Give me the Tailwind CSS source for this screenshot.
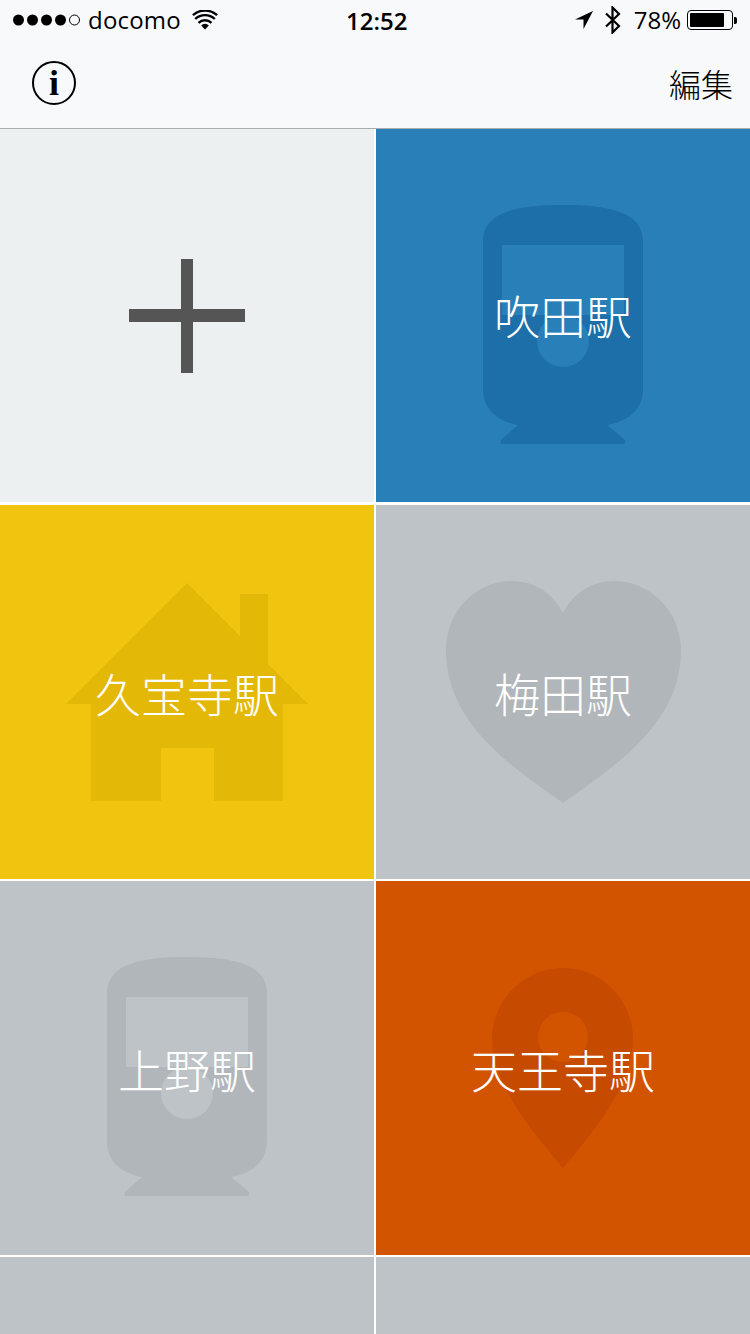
<!DOCTYPE html>
<html lang="ja">
<head>
<meta charset="utf-8">
<script src="https://cdn.jsdelivr.net/npm/@tailwindcss/browser@4"></script>
</head>
<body class="m-0 bg-white">
<div class="w-[750px] h-[1334px] overflow-hidden flex flex-col bg-white font-['Liberation_Sans','Noto_Sans_CJK_JP',sans-serif]">
  <header class="h-[129px] shrink-0 flex flex-col bg-[#f8f9fa] border-b border-[#a9abad] text-black">
    <div class="h-[40px] flex items-center justify-between pl-[13px] pr-[13px] text-[25px] relative">
      <div class="flex items-center">
        <svg width="68" height="12" viewBox="0 0 68 12"><g fill="#000"><circle cx="5.5" cy="6" r="5.5"/><circle cx="19.5" cy="6" r="5.5"/><circle cx="33.5" cy="6" r="5.5"/><circle cx="47.5" cy="6" r="5.5"/></g><circle cx="61.5" cy="6" r="5" fill="none" stroke="#000" stroke-width="1"/></svg>
        <span class="ml-[7px] font-['Open_Sans','Noto_Sans',sans-serif] text-[24px] tracking-[0.2px]">docomo</span>
        <svg class="ml-[11px]" width="26" height="20" viewBox="0 0 26 20"><path d="M13 19.5 9.2 15.4a5.4 5.4 0 0 1 7.6 0Z" fill="#000"/><path d="M6.5 12.2a9.5 9.5 0 0 1 13 0M3.2 8.4a14.3 14.3 0 0 1 19.6 0M.9 4.6a18 18 0 0 1 24.2 0" fill="none" stroke="#000" stroke-width="2.4" transform="translate(0 .6)"/></svg>
      </div>
      <div class="absolute left-[346px] top-[2px] text-[24px] font-semibold font-['Open_Sans',sans-serif] leading-[38px]">12:52</div>
      <div class="flex items-center">
        <svg width="20" height="20" viewBox="0 0 20 20"><path d="M19 1 1 9.5h8.5V19Z" fill="#000"/></svg>
        <svg class="ml-[10px]" width="18" height="28" viewBox="0 0 18 28"><path d="M2 7.5 15 20l-6.5 6.5v-25L15 8 2 20.5" fill="none" stroke="#000" stroke-width="2.2"/></svg>
        <span class="ml-[12px] font-['Open_Sans','Noto_Sans',sans-serif] text-[24px]">78%</span>
        <div class="ml-[6px] flex items-center">
          <div class="w-[46px] h-[20px] rounded-[4px] border border-black p-[2px]"><div class="w-[34px] h-full bg-black rounded-[1px]"></div></div>
          <div class="w-[3px] h-[7px] bg-black rounded-r-[2px] ml-[1px]"></div>
        </div>
      </div>
    </div>
    <div class="flex-1 flex items-center justify-between pl-[32px] pr-[17px] pb-[3px]">
      <div class="w-[44px] h-[44px] rounded-full border-2 border-black flex items-center justify-center font-['Liberation_Serif',serif] text-[36px] font-bold leading-none">i</div>
      <span class="text-[32px] leading-none font-['Noto_Sans_CJK_JP',sans-serif] font-light">編集</span>
    </div>
  </header>
  <main class="grid grid-cols-[374px_374px] auto-rows-[374px] gap-[2px] font-['Noto_Sans_CJK_JP',sans-serif]">
    <div class="relative h-[373px] bg-[#ecf0f1] flex items-center justify-center">
      <svg width="116" height="116" viewBox="0 0 116 116"><path d="M52 1h12v114H52zM0 51h116v13H0z" fill="#555"/></svg>
    </div>
    <div class="relative h-[373px] bg-[#2980b9] flex items-center justify-center text-white">
      <svg class="absolute inset-0" width="374" height="373" viewBox="0 0 374 373"><path fill-rule="evenodd" d="M187 76c-46 0-80 7-80 36v148c0 20 14 32 35 36l-16 14c-2 1-2 5 0 5h121c3 0 3-4 1-5l-17-14c22-4 36-16 36-36V112c0-29-34-36-80-36Zm-61 40h122v70H126Zm61 70a23 23 0 0 1 0 52 23 23 0 0 1 0-52Z" fill="#1c6fa9" transform="translate(0 0)"/></svg>
      <span class="relative text-[46px] font-light tracking-[0px] -mt-[2px]">吹田駅</span>
    </div>
    <div class="relative bg-[#f1c40f] flex items-center justify-center text-white">
      <svg class="absolute inset-0" width="374" height="374" viewBox="0 0 374 374"><path d="M187 78 66 199h25v97h70v-53h53v53h69v-97h25l-40-40v-70h-28v42Z" fill="#e3b807"/></svg>
      <span class="relative text-[46px] font-light">久宝寺駅</span>
    </div>
    <div class="relative bg-[#bdc3c7] flex items-center justify-center text-white">
      <svg class="absolute inset-0" width="374" height="374" viewBox="0 0 374 374"><path d="M187 298C130 258 70 216 70 145c0-39 30-69 66-69 24 0 42 14 51 32 9-18 27-32 51-32 36 0 67 30 67 69 0 71-61 113-118 153Z" fill="#b1b6ba"/></svg>
      <span class="relative text-[46px] font-light">梅田駅</span>
    </div>
    <div class="relative bg-[#bdc3c7] flex items-center justify-center text-white">
      <svg class="absolute inset-0" width="374" height="374" viewBox="0 0 374 374"><path fill-rule="evenodd" d="M187 76c-46 0-80 7-80 36v148c0 20 14 32 35 36l-16 14c-2 1-2 5 0 5h121c3 0 3-4 1-5l-17-14c22-4 36-16 36-36V112c0-29-34-36-80-36Zm-61 40h122v70H126Zm61 70a23 23 0 0 1 0 52 23 23 0 0 1 0-52Z" fill="#b1b6ba"/></svg>
      <span class="relative text-[46px] font-light">上野駅</span>
    </div>
    <div class="relative bg-[#d35400] flex items-center justify-center text-white">
      <svg class="absolute inset-0" width="374" height="374" viewBox="0 0 374 374"><path fill-rule="evenodd" d="M187 87c-39 0-71 32-71 71 0 48 45 98 71 129 26-31 70-81 70-129 0-39-31-71-70-71Zm0 44a25 25 0 1 1 0 50 25 25 0 0 1 0-50Z" fill="#c64a00"/></svg>
      <span class="relative text-[46px] font-light">天王寺駅</span>
    </div>
    <div class="bg-[#bdc3c7]"></div>
    <div class="bg-[#bdc3c7]"></div>
  </main>
</div>
</body>
</html>
